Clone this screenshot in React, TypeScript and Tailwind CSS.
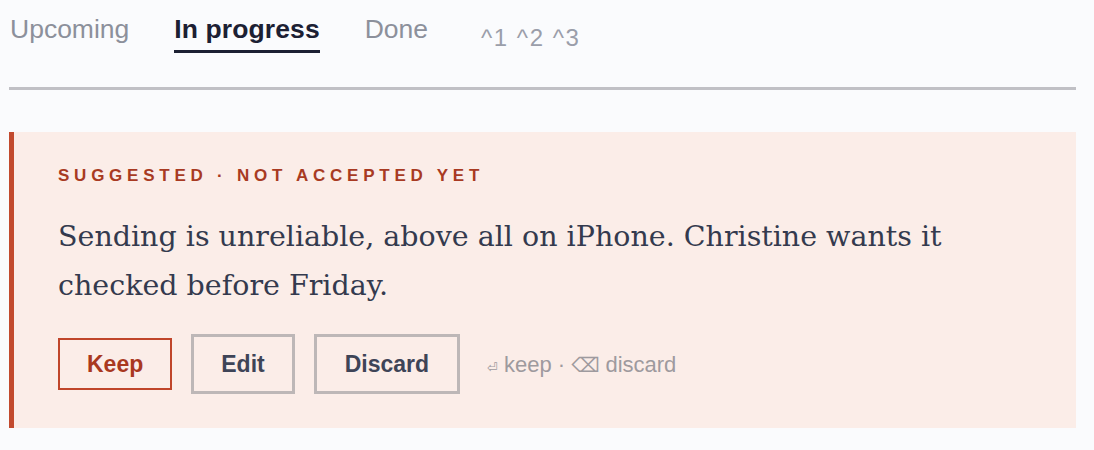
import React from "react";

const SANS = { fontFamily: '"Liberation Sans", Arial, sans-serif' };
const SERIF = { fontFamily: '"DejaVu Serif", "Liberation Serif", serif' };

const tabs = [
  { label: "Upcoming", active: false },
  { label: "In progress", active: true },
  { label: "Done", active: false },
];

export default function App() {
  return (
    <div className="min-h-screen bg-[#fafbfd] pl-[9px] pr-[18px] pt-[14px]" style={SANS}>
      {/* tabit + pikanäppäimet */}
      <nav className="flex items-start border-b-[3px] border-[#c0c0c5] pb-[34px] pl-px">
        <div className="flex items-start gap-[45px]">
          {tabs.map((t) => (
            <div
              key={t.label}
              className={
                t.active
                  ? "border-b-[3px] border-[#1c2033] pb-[6px] text-[26.5px] leading-[30px] font-bold tracking-[0.1px] text-[#1c2033]"
                  : "border-b-[3px] border-transparent pb-[6px] text-[26.5px] leading-[30px] text-[#8c909b]"
              }
            >
              {t.label}
            </div>
          ))}
        </div>
        <span className="ml-[53px] mt-[10px] text-[24px] leading-[28px] tracking-[1.5px] text-[#9a9eaa]">
          ^1 ^2 ^3
        </span>
      </nav>

      {/* ehdotuskortti */}
      <div className="mt-[42px] border-l-[5px] border-[#c24a2e] bg-[#fbede8] pl-[44px] pr-[45px] pt-8 pb-[34px]">
        <div className="text-[17px] leading-6 font-bold tracking-[0.28em] text-[#a83a22]">
          SUGGESTED · NOT ACCEPTED YET
        </div>
        <p className="mt-6 max-w-[920px] text-[28.5px] leading-[49px] text-[#343a4e]" style={SERIF}>
          Sending is unreliable, above all on iPhone. Christine wants it checked before Friday.
        </p>
        <div className="mt-6 flex items-center gap-5">
          <button className="h-[52px] border-2 border-[#c0452a] px-[27px] text-[23px] font-bold text-[#a9381f]">
            Keep
          </button>
          <button className="-ml-px h-[60px] border-[3px] border-[#bdb7b7] px-[27px] text-[23px] font-bold text-[#3e4457]">
            Edit
          </button>
          <button className="-ml-px h-[60px] border-[3px] border-[#bdb7b7] px-[28px] text-[23px] font-bold text-[#3e4457]">
            Discard
          </button>
          <span className="ml-[7px] flex items-baseline text-[22px] text-[#9e9a9e]">
            <span className="mr-[6px] text-[13px]" style={{ fontFamily: '"DejaVu Sans", sans-serif' }}>⏎</span>
            keep ·{" "}
            <span className="mx-[6px] text-[20px]" style={{ fontFamily: '"DejaVu Sans", sans-serif' }}>⌫</span>
            discard
          </span>
        </div>
      </div>
    </div>
  );
}
